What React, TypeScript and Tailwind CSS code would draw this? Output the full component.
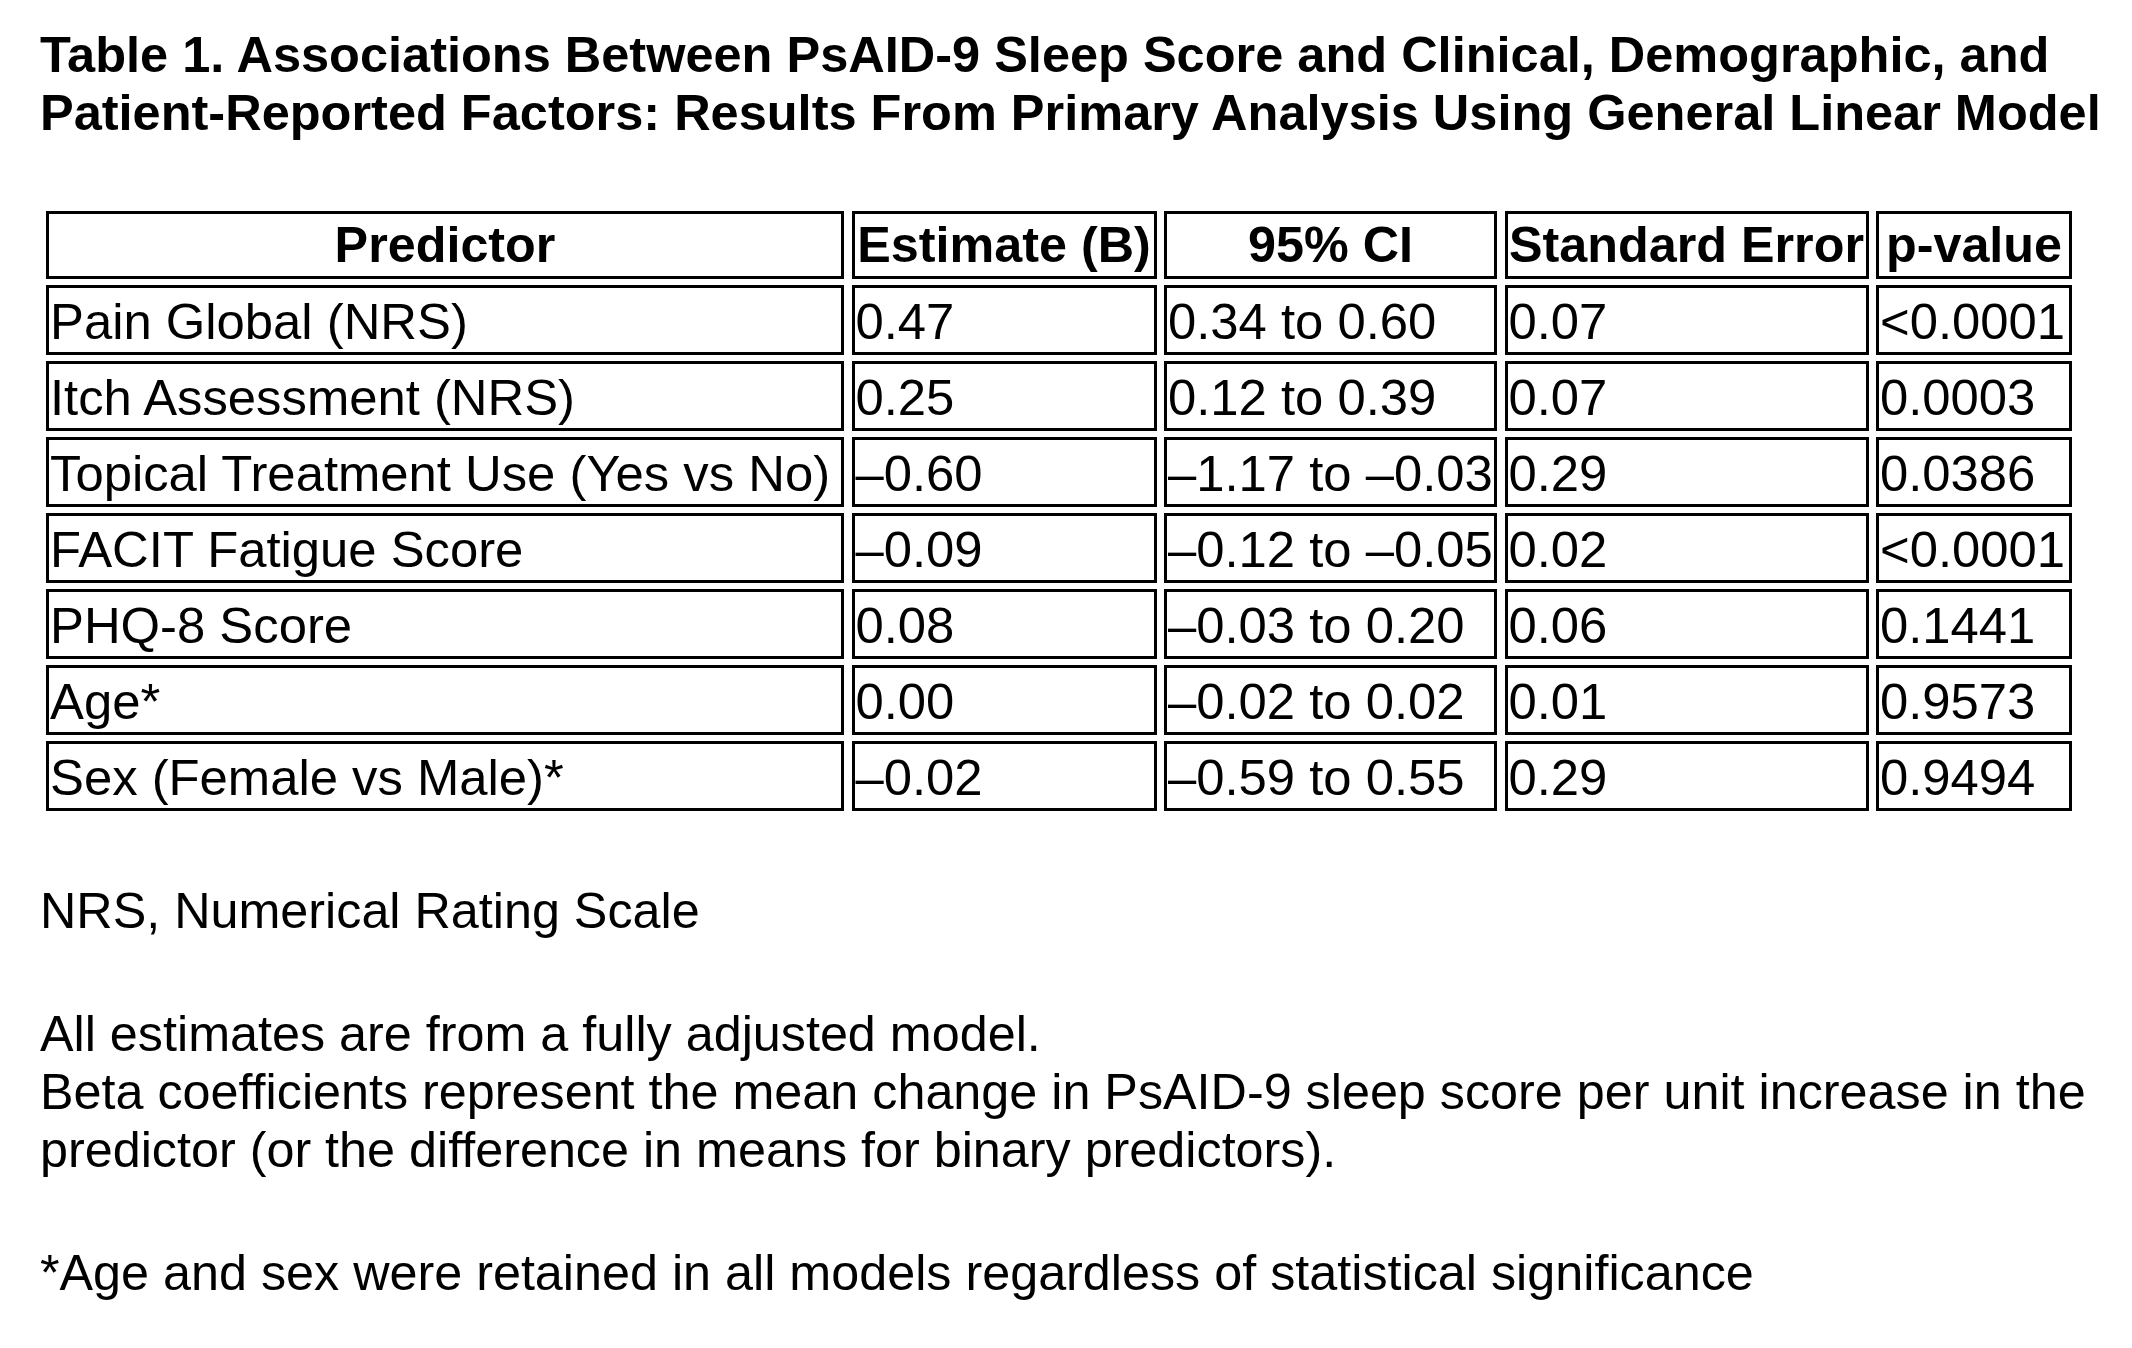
import React from "react";

const rows = [
  ["Pain Global (NRS)", "0.47", "0.34 to 0.60", "0.07", "<0.0001"],
  ["Itch Assessment (NRS)", "0.25", "0.12 to 0.39", "0.07", "0.0003"],
  ["Topical Treatment Use (Yes vs No)", "–0.60", "–1.17 to –0.03", "0.29", "0.0386"],
  ["FACIT Fatigue Score", "–0.09", "–0.12 to –0.05", "0.02", "<0.0001"],
  ["PHQ-8 Score", "0.08", "–0.03 to 0.20", "0.06", "0.1441"],
  ["Age*", "0.00", "–0.02 to 0.02", "0.01", "0.9573"],
  ["Sex (Female vs Male)*", "–0.02", "–0.59 to 0.55", "0.29", "0.9494"],
];

const headers = ["Predictor", "Estimate (B)", "95% CI", "Standard Error", "p-value"];

export default function App() {
  return (
    <div
      className="min-h-screen bg-white text-black px-[40px] pt-[26px] text-[50.3px] leading-[1.15]"
      style={{ fontFamily: '"Liberation Sans", Arial, sans-serif' }}
    >
      <h1 className="font-bold whitespace-nowrap text-[50.5px] leading-[57.5px]">
        Table 1. Associations Between PsAID-9 Sleep Score and Clinical, Demographic, and
        <br />
        Patient-Reported Factors: Results From Primary Analysis Using General Linear Model
      </h1>

      <div className="mt-[70px] ml-[6px] grid w-fit grid-cols-[798px_305px_333px_364px_196px] gap-x-[7.5px] gap-y-[6px]">
        {headers.map((h) => (
          <div
            key={h}
            className="h-[68px] border-[3px] border-black flex items-center justify-center font-bold whitespace-nowrap"
          >
            {h}
          </div>
        ))}
        {rows.map((r) =>
          r.map((c, i) => (
            <div
              key={r[0] + i}
              className="h-[70px] border-[3px] border-black flex items-center pl-[1px] pt-[4px] text-[50.8px] whitespace-nowrap"
            >
              {c}
            </div>
          ))
        )}
      </div>

      <div className="mt-[71px] leading-[58px] whitespace-nowrap">
        <p>NRS, Numerical Rating Scale</p>
        <p className="mt-[65px]">
          All estimates are from a fully adjusted model.
          <br />
          Beta coefficients represent the mean change in PsAID-9 sleep score per unit increase in the
          <br />
          predictor (or the difference in means for binary predictors).
        </p>
        <p className="mt-[65px]">*Age and sex were retained in all models regardless of statistical significance</p>
      </div>
    </div>
  );
}
